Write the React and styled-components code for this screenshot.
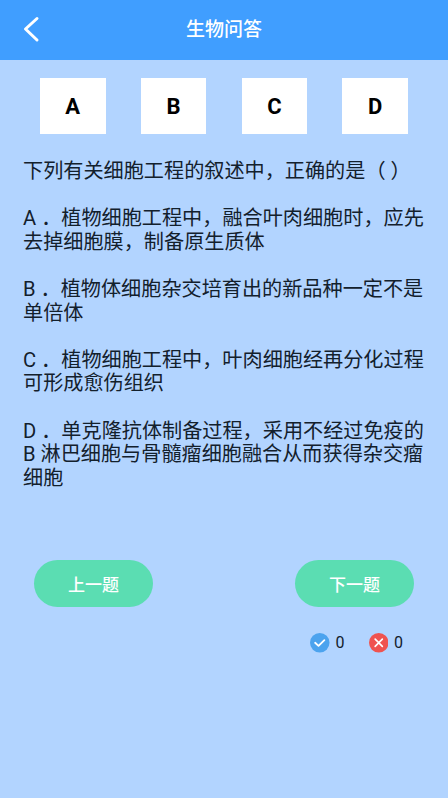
import React from "react";
import styled, { createGlobalStyle } from "styled-components";

const Global = createGlobalStyle`
  html, body { margin: 0; padding: 0; }
  body { background: #b2d4ff; font-family: Roboto, "Noto Sans CJK SC", sans-serif; }
`;

const Page = styled.div`
  width: 448px;
  height: 798px;
  overflow: hidden;
  background: #b2d4ff;
  display: flex;
  flex-direction: column;
`;

const Header = styled.header`
  height: 60px;
  flex: none;
  background: #409eff;
  display: flex;
  align-items: center;
  justify-content: center;
  position: relative;
`;

const Back = styled.svg`
  position: absolute;
  left: 22px;
  top: 15px;
  width: 20px;
  height: 28px;
`;

const Title = styled.h1`
  margin: 0;
  color: #fff;
  font-size: 19px;
  line-height: 60px;
  font-weight: 500;
`;

const Options = styled.div`
  display: flex;
  justify-content: space-between;
  padding: 18px 40px 0;
`;

const Option = styled.div`
  width: 65.5px;
  height: 56px;
  background: #fff;
  color: #000;
  display: flex;
  align-items: center;
  justify-content: center;
  font-size: 22px;
  font-weight: 700;
`;

const Question = styled.div`
  padding: 26px 20px 0 23px;
  color: #13202c;
  font-size: 20.15px;
  line-height: 23.6px;
`;

const Paragraph = styled.p`
  margin: 0 0 23.6px;
`;

const Nav = styled.div`
  display: flex;
  justify-content: space-between;
  padding: 46px 34px 0;
`;

const NavButton = styled.button`
  width: 119px;
  height: 47px;
  border: 0;
  border-radius: 24px;
  background: #5bddb2;
  color: #fff;
  font-family: inherit;
  font-size: 17px;
  font-weight: 500;
  padding: 0;
`;

const Score = styled.div`
  display: flex;
  justify-content: flex-end;
  padding: 26px 45px 0 0;
  gap: 24px;
`;

const ScoreItem = styled.div`
  display: flex;
  align-items: center;
  gap: 6px;
  color: #13202c;
  font-size: 16px;
  line-height: 20px;
`;

const Dot = styled.svg`
  width: 19.5px;
  height: 19.5px;
  display: block;
`;

export default function App() {
  return (
    <Page>
      <Global />
      <Header>
        <Back viewBox="0 0 20 28">
          <path d="M15 3.5 L3.5 14 L15 25" fill="none" stroke="#fff" strokeWidth="3" strokeLinecap="round" strokeLinejoin="round" />
        </Back>
        <Title>生物问答</Title>
      </Header>
      <Options>
        <Option>A</Option>
        <Option>B</Option>
        <Option>C</Option>
        <Option>D</Option>
      </Options>
      <Question>
        <Paragraph>下列有关细胞工程的叙述中，正确的是（ ）</Paragraph>
        <Paragraph>A&nbsp;．植物细胞工程中，融合叶肉细胞时，应先去掉细胞膜，制备原生质体</Paragraph>
        <Paragraph>B&nbsp;．植物体细胞杂交培育出的新品种一定不是单倍体</Paragraph>
        <Paragraph>C&nbsp;．植物细胞工程中，叶肉细胞经再分化过程可形成愈伤组织</Paragraph>
        <Paragraph>D&nbsp;．单克隆抗体制备过程，采用不经过免疫的 B 淋巴细胞与骨髓瘤细胞融合从而获得杂交瘤细胞</Paragraph>
      </Question>
      <Nav>
        <NavButton>上一题</NavButton>
        <NavButton>下一题</NavButton>
      </Nav>
      <Score>
        <ScoreItem>
          <Dot viewBox="0 0 19 19">
            <circle cx="9.5" cy="9.5" r="9.5" fill="#4ca3ee" />
            <path d="M5 9.5 L8.3 12.5 L14 7" fill="none" stroke="#fff" strokeWidth="1.8" strokeLinecap="round" strokeLinejoin="round" />
          </Dot>
          0
        </ScoreItem>
        <ScoreItem>
          <Dot viewBox="0 0 19 19">
            <circle cx="9.5" cy="9.5" r="9.5" fill="#ef5350" />
            <path d="M6 6 L13 13 M13 6 L6 13" fill="none" stroke="#fff" strokeWidth="1.6" strokeLinecap="round" />
          </Dot>
          0
        </ScoreItem>
      </Score>
    </Page>
  );
}
